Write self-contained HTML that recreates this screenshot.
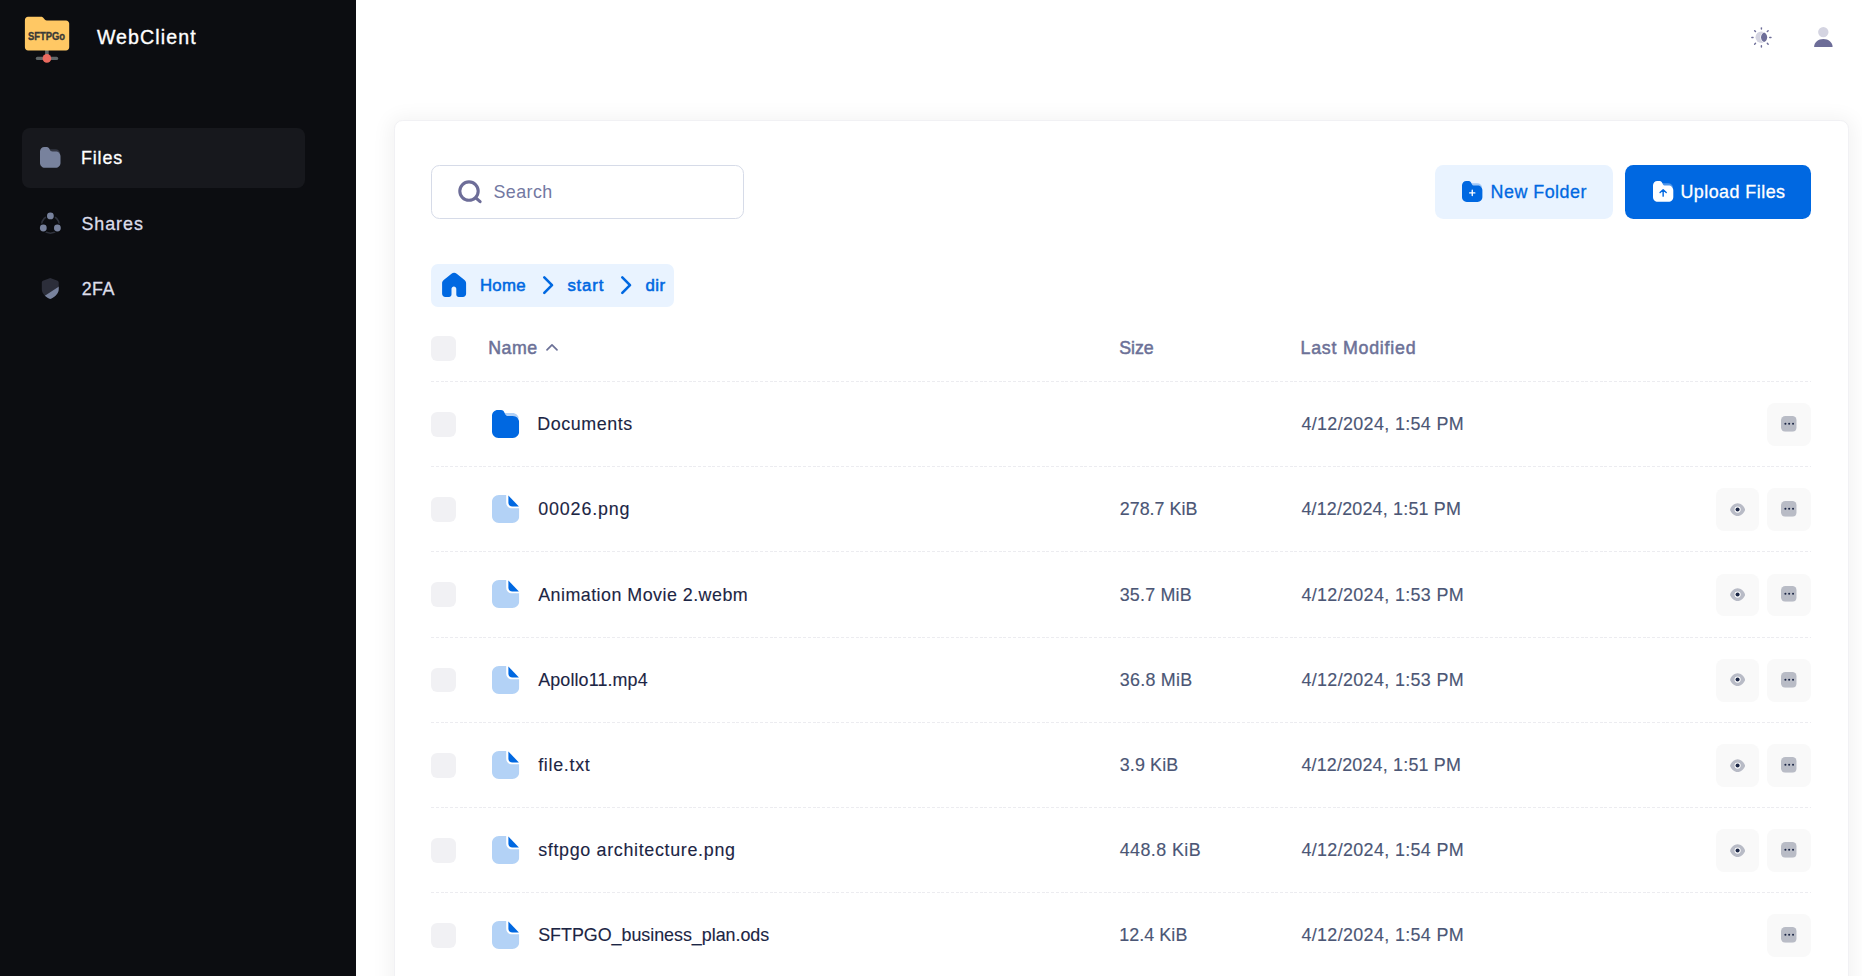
<!DOCTYPE html>
<html lang="en">
<head>
<meta charset="utf-8">
<title>WebClient - Files</title>
<style>
*{box-sizing:border-box;margin:0;padding:0}
html,body{width:1862px;height:976px;overflow:hidden;background:#fff}
body{font-family:"Liberation Sans",sans-serif;position:relative;color:#252f4a}
.abs{position:absolute}
svg{display:block;position:absolute;overflow:visible}
.t{position:absolute;white-space:nowrap;line-height:24px;height:24px}

/* sidebar */
#sidebar{position:absolute;left:0;top:0;width:356px;height:976px;background:#0c0d11}
.brand{color:#fff;-webkit-text-stroke:.35px #fff}
.mi{position:absolute;left:22px;width:283px;height:60px;border-radius:8px}
.mi.active{background:#17181d}
.mi .t{color:#dcdde9;-webkit-text-stroke:.3px #dcdde9}
.mi.active .t{color:#fff;-webkit-text-stroke:.3px #fff}

/* main */
#card{position:absolute;left:393.800px;top:119.700px;width:1455.200px;height:900px;background:#fff;border:1px solid #f1f1f4;border-radius:8.600px;box-shadow:0 2px 19px 4.800px rgba(0,0,0,.05)}
#search{position:absolute;left:431px;top:165px;width:313px;height:54px;border:1.340px solid #d6dbe8;border-radius:8.400px;background:#fff}
#search .t{color:#7378a2;margin:-.500px 0 0 -1.340px}
.btn{position:absolute;top:165px;height:54px;border-radius:8.400px}
.btn .t{-webkit-text-stroke:.3px currentColor}
#newfolder{left:1435px;width:178px;background:#e9f3ff;color:#0068e1}
#upload{left:1625px;width:186px;background:#0068e1;color:#fff}
#crumb{position:absolute;left:431px;top:264px;width:243.300px;height:43px;border-radius:7px;background:#e9f3ff;color:#0068e1}
#crumb .t{-webkit-text-stroke:.55px currentColor}

/* table */
.cb{position:absolute;left:431px;width:24.800px;height:24.800px;border-radius:6.200px;background:#f1f1f4}
.th{color:#6c7197;-webkit-text-stroke:.5px #6c7197}
.hr{position:absolute;left:431px;width:1380px;height:1px;background:repeating-linear-gradient(90deg,#ececf0 0,#ececf0 3px,transparent 3px,transparent 4.770px)}
.row{position:absolute;left:0;width:1862px;height:85px}
.nm{color:#1c2544;-webkit-text-stroke:.12px #1c2544}
.sz{color:#4b5675;-webkit-text-stroke:.15px #4b5675}
.dt{color:#4b5675;-webkit-text-stroke:.15px #4b5675}
.ib{position:absolute;top:21.900px;width:43.400px;height:42.800px;border-radius:8px;background:#f9f9f9}
.ib.eye{left:1716px;width:43px}
.ib.more{left:1767.300px}
</style>
</head>
<body>

<aside id="sidebar">
  <svg style="left:20px;top:12px" width="56" height="56" viewBox="20 12 56 56">
    <rect x="45.1" y="49" width="3.6" height="8" fill="#5f6567"/>
    <rect x="35.8" y="56.8" width="22.4" height="3.3" rx="1.6" fill="#5f6567"/>
    <circle cx="46.9" cy="58.4" r="4.3" fill="#eb6a5f"/>
    <path d="M28 16.8 H41 C42.4 16.8 43 17.3 43.9 18.4 L45 19.7 C45.5 20.2 46 20.4 46.8 20.4 H66 C67.8 20.4 69.2 21.8 69.2 23.6 V47.3 C69.2 49.1 67.8 50.5 66 50.5 H28.1 C26.3 50.5 24.9 49.1 24.9 47.3 V20 C24.9 18.2 26.3 16.8 28 16.8 Z" fill="#ffc864"/>
    <text x="46.500" y="40" text-anchor="middle" style="font-family:'Liberation Sans',sans-serif;font-weight:700;font-size:10.400px" fill="#3a3a37" stroke="#3a3a37" stroke-width=".35" textLength="37.200" lengthAdjust="spacingAndGlyphs">SFTPGo</text>
  </svg>
  <div class="t brand" style="left:96.90px;top:24.80px;font-size:19.6px;letter-spacing:1.089px">WebClient</div>

  <div class="mi active" style="top:128px">
    <svg style="left:18.100px;top:18.800px" width="20.500" height="20.700" viewBox="0 0 27.200 27.900" preserveAspectRatio="none">
      <path opacity=".3" fill="#78829d" d="M11 2.900H20.500C23.800 2.900 26.400 5.300 26.800 8.500H11Z"/>
      <path fill="#78829d" d="M5.800 0H9C11 0 11.900 1.200 12.700 3.200C13.500 5.200 14.600 6.100 16.600 6.100H20.800C24.400 6.100 27.200 8.900 27.200 12.500V21.500C27.200 25.100 24.400 27.900 20.800 27.900H6.400C2.800 27.900 0 25.100 0 21.500V5.800C0 2.600 2.600 0 5.800 0Z"/>
    </svg>
    <div class="t" style="left:59.00px;top:18.00px;font-size:17.9px;letter-spacing:0.843px">Files</div>
  </div>
  <div class="mi" style="top:193.5px">
    <svg style="left:16px;top:17.500px" width="25" height="25" viewBox="38 211 25 25">
      <circle cx="50.400" cy="224.500" r="8.700" fill="none" stroke="#78829d" stroke-opacity=".32" stroke-width="1.600"/>
      <g fill="#0c0d11"><circle cx="50.400" cy="215.900" r="4.700"/><circle cx="43.300" cy="228" r="4.700"/><circle cx="57.400" cy="228" r="4.700"/></g>
      <g fill="#78829d"><circle cx="50.400" cy="215.900" r="3.400"/><circle cx="43.300" cy="228" r="3.400"/><circle cx="57.400" cy="228" r="3.400"/></g>
    </svg>
    <div class="t" style="left:59.40px;top:18.60px;font-size:17.9px;letter-spacing:0.952px">Shares</div>
  </div>
  <div class="mi" style="top:258.8px">
    <svg style="left:18px;top:17.200px" width="22" height="25" viewBox="40 276 22 25">
      <defs><clipPath id="shc"><path d="M50.250 278 57.600 280.800C58.300 281.100 58.700 281.700 58.700 282.400V289C58.700 293.500 55.200 296.800 50.900 298.800C50.500 299 50 299 49.600 298.800C45.300 296.800 41.800 293.500 41.800 289V282.400C41.800 281.700 42.200 281.100 42.900 280.800Z"/></clipPath></defs>
      <g clip-path="url(#shc)"><rect x="40" y="276" width="22" height="25" fill="#2c2e3a"/><path d="M40 299 62 284.400V302H40Z" fill="#78829d"/></g>
    </svg>
    <div class="t" style="left:59.80px;top:18.10px;font-size:17.9px;letter-spacing:0.355px">2FA</div>
  </div>
</aside>

<!-- header icons -->
<svg style="left:1749px;top:25px" width="25" height="25" viewBox="1749 25 25 25">
  <g stroke="#6d6d98" stroke-width="1.450" stroke-linecap="round"><line x1="1769.75" y1="37.40" x2="1770.95" y2="37.40"/><line x1="1767.30" y1="43.30" x2="1768.15" y2="44.15"/><line x1="1761.40" y1="45.75" x2="1761.40" y2="46.95"/><line x1="1755.50" y1="43.30" x2="1754.65" y2="44.15"/><line x1="1753.05" y1="37.40" x2="1751.85" y2="37.40"/><line x1="1755.50" y1="31.50" x2="1754.65" y2="30.65"/><line x1="1761.40" y1="29.05" x2="1761.40" y2="27.85"/><line x1="1767.30" y1="31.50" x2="1768.15" y2="30.65"/></g>
  <circle cx="1761.300" cy="37.200" r="5.800" fill="#d4d4e1"/>
  <path d="M1764.100 32.500A5.300 5.300 0 0 1 1764.100 42.100A5.300 5.300 0 0 1 1764.100 32.500Z" fill="#6d6d98" stroke="#fff" stroke-width="1.300" paint-order="stroke"/>
</svg>
<svg style="left:1812px;top:25px" width="24" height="24" viewBox="1812 25 24 24">
  <circle cx="1823.300" cy="32.100" r="5.200" fill="#d4d4e1"/>
  <path d="M1814.100 46.900 C1814.100 42.500 1818.200 39 1823.350 39 C1828.500 39 1832.600 42.500 1832.600 46.900 Z" fill="#6d6d98"/>
</svg>

<div id="card"></div>

<!-- toolbar -->
<div id="search">
  <svg style="left:24.660px;top:12.700px" width="26" height="26" viewBox="457 178.400 26 26">
    <circle cx="469" cy="190.500" r="9.200" fill="none" stroke="#6d6d98" stroke-width="3.100"/>
    <line x1="475.800" y1="197.300" x2="480.100" y2="201.100" stroke="#6d6d98" stroke-width="3.100" stroke-linecap="round"/>
  </svg>
  <div class="t" style="left:62.80px;top:14.80px;font-size:17.9px;letter-spacing:0.433px">Search</div>
</div>

<div class="btn" id="newfolder">
  <svg style="left:27.350px;top:15.900px" width="20.400" height="20.900" viewBox="0 0 27.200 27.900" preserveAspectRatio="none">
    <path opacity=".3" fill="#0068e1" d="M11 2.900H20.500C23.800 2.900 26.400 5.300 26.800 8.500H11Z"/>
    <path fill="#0068e1" d="M5.800 0H9C11 0 11.900 1.200 12.700 3.200C13.500 5.200 14.600 6.100 16.600 6.100H20.800C24.400 6.100 27.200 8.900 27.200 12.500V21.500C27.200 25.100 24.400 27.900 20.800 27.900H6.400C2.800 27.900 0 25.100 0 21.500V5.800C0 2.600 2.600 0 5.800 0Z"/>
    <path d="M13.670 12.400V19.300M10.200 15.870H17.100" stroke="#fff" stroke-width="1.800" stroke-linecap="round"/>
  </svg>
  <div class="t" style="left:55.60px;top:15.00px;font-size:17.9px;letter-spacing:0.476px">New Folder</div>
</div>
<div class="btn" id="upload">
  <svg style="left:27.700px;top:15.800px" width="20.300" height="20.800" viewBox="0 0 27.200 27.900" preserveAspectRatio="none">
    <path opacity=".3" fill="#fff" d="M11 2.900H20.500C23.800 2.900 26.400 5.300 26.800 8.500H11Z"/>
    <path fill="#fff" d="M5.800 0H9C11 0 11.900 1.200 12.700 3.200C13.500 5.200 14.600 6.100 16.600 6.100H20.800C24.400 6.100 27.200 8.900 27.200 12.500V21.500C27.200 25.100 24.400 27.900 20.800 27.900H6.400C2.800 27.900 0 25.100 0 21.500V5.800C0 2.600 2.600 0 5.800 0Z"/>
    <path d="M13.600 20.300V11.900M9.500 15.400 13.600 11.700 17.700 15.400" fill="none" stroke="#0068e1" stroke-width="1.900" stroke-linecap="round" stroke-linejoin="round"/>
  </svg>
  <div class="t" style="left:55.40px;top:15.00px;font-size:17.9px;letter-spacing:0.473px">Upload Files</div>
</div>

<!-- breadcrumb -->
<div id="crumb">
  <svg style="left:10.800px;top:8.500px" width="24" height="24" viewBox="441.800 272.500 24 24">
    <path fill="#0068e1" d="M451.300 273.300 443.500 279.500C442.500 280.300 441.900 281.500 441.900 282.800V293.200C441.900 295 443.300 296.400 445.100 296.400H448.900C450.200 296.400 451.300 295.300 451.300 294V288.300C451.300 287 452.400 285.900 453.700 285.900S456.100 287 456.100 288.300V294C456.100 295.300 457.200 296.400 458.500 296.400H462.700C464.500 296.400 465.900 295 465.900 293.200V282.800C465.900 281.500 465.300 280.300 464.300 279.500L456.500 273.300C455 272.050 452.800 272.050 451.300 273.300Z"/>
  </svg>
  <div class="t" style="left:48.90px;top:9.50px;font-size:16.8px;letter-spacing:0.323px">Home</div>
  <svg style="left:112px;top:11.700px" width="11" height="19" viewBox="543 275.700 11 19"><path d="M544.300 277 552 284.750 544.300 292.500" fill="none" stroke="#0068e1" stroke-width="2.600" stroke-linecap="round" stroke-linejoin="round"/></svg>
  <div class="t" style="left:136.40px;top:9.50px;font-size:16.8px;letter-spacing:0.831px">start</div>
  <svg style="left:190.200px;top:11.700px" width="11" height="19" viewBox="543 275.700 11 19"><path d="M544.300 277 552 284.750 544.300 292.500" fill="none" stroke="#0068e1" stroke-width="2.600" stroke-linecap="round" stroke-linejoin="round"/></svg>
  <div class="t" style="left:214.60px;top:9.50px;font-size:16.8px;letter-spacing:0.369px">dir</div>
</div>

<!-- table -->
<div id="table">
<svg width="0" height="0" style="left:0;top:0"><defs>
  <symbol id="i-folder" viewBox="0 0 27.200 27.900" preserveAspectRatio="none">
    <path opacity=".3" fill="#0068e1" d="M11 2.900H20.500C23.800 2.900 26.400 5.300 26.800 8.500H11Z"/>
    <path fill="#0068e1" d="M5.800 0H9C11 0 11.900 1.200 12.700 3.200C13.500 5.200 14.600 6.100 16.600 6.100H20.800C24.400 6.100 27.200 8.900 27.200 12.500V21.500C27.200 25.100 24.400 27.900 20.800 27.900H6.400C2.800 27.900 0 25.100 0 21.500V5.800C0 2.600 2.600 0 5.800 0Z"/>
  </symbol>
  <symbol id="i-file" viewBox="0 0 27.300 28">
    <path fill="#b3d2f6" d="M7 0H14.200V7.500C14.200 11 16.400 13.200 19.900 13.200H27.300V21C27.300 24.900 24.200 28 20.300 28H7C3.100 28 0 24.900 0 21V7C0 3.100 3.100 0 7 0Z"/>
    <path fill="#0068e1" d="M16.400 0.400 26.900 11.500H20.500C18 11.500 16.400 9.900 16.400 7.400Z"/>
  </symbol>
  <symbol id="i-eye" viewBox="0 0 16 14">
    <path fill="#b8bbc6" d="M8 0.300C11.600 0.300 14.400 3.300 15.700 6.200C15.900 6.700 15.900 7.300 15.700 7.800C14.400 10.700 11.600 13.700 8 13.700S1.600 10.700 0.300 7.800C0.100 7.300 0.100 6.700 0.300 6.200C1.600 3.300 4.400 0.300 8 0.300Z"/>
    <circle cx="8" cy="6.900" r="3.250" fill="#fff"/><circle cx="8" cy="6.900" r="2.150" fill="#1b2645"/>
  </symbol>
  <symbol id="i-more" viewBox="0 0 16 16">
    <rect width="16" height="16" rx="4.400" fill="#b9bcc6"/>
    <circle cx="4.500" cy="8" r="1.050" fill="#1b2645"/><circle cx="8.300" cy="8" r="1.050" fill="#1b2645"/><circle cx="12.300" cy="8" r="1.050" fill="#1b2645"/>
  </symbol>
</defs></svg>
<div class="cb" style="top:336.100px"></div>
<div class="t th" style="left:488.30px;top:335.70px;font-size:17.8px;letter-spacing:0.486px">Name</div>
<svg style="left:545px;top:343px" width="14" height="9" viewBox="545 343.500 14 9"><path d="M547 350.300 552 345.400 557 350.300" fill="none" stroke="#6c7197" stroke-width="1.700" stroke-linecap="round" stroke-linejoin="round"/></svg>
<div class="t th" style="left:1119.30px;top:335.70px;font-size:17.8px;letter-spacing:-0.100px">Size</div>
<div class="t th" style="left:1300.50px;top:335.70px;font-size:17.8px;letter-spacing:0.778px">Last Modified</div>
<div class="hr" style="top:381px"></div>
<div class="row" style="top:381.30px">
  <div class="cb" style="top:30.800px"></div>
  <svg style="left:491.800px;top:28.600px" width="27.200" height="27.900"><use href="#i-folder"/></svg>
  <div class="t nm" style="left:537.20px;top:30.90px;font-size:17.9px;letter-spacing:0.570px">Documents</div>
  <div class="t dt" style="left:1301.40px;top:30.90px;font-size:17.9px;letter-spacing:0.361px">4/12/2024, 1:54 PM</div>
  <div class="ib more"><svg style="left:13.900px;top:12.800px" width="15.700" height="15.700"><use href="#i-more"/></svg></div>
</div>
<div class="hr" style="top:466px"></div>
<div class="row" style="top:466.50px">
  <div class="cb" style="top:30.800px"></div>
  <svg style="left:491.800px;top:28.800px" width="27.300" height="28"><use href="#i-file"/></svg>
  <div class="t nm" style="left:538.20px;top:30.90px;font-size:17.9px;letter-spacing:0.847px">00026.png</div>
  <div class="t sz" style="left:1119.70px;top:30.90px;font-size:17.9px;letter-spacing:0.019px">278.7 KiB</div>
  <div class="t dt" style="left:1301.40px;top:30.90px;font-size:17.9px;letter-spacing:0.197px">4/12/2024, 1:51 PM</div>
  <div class="ib eye"><svg style="left:14px;top:14.700px" width="15.200" height="13.300"><use href="#i-eye"/></svg></div>
  <div class="ib more"><svg style="left:13.900px;top:12.800px" width="15.700" height="15.700"><use href="#i-more"/></svg></div>
</div>
<div class="hr" style="top:551px"></div>
<div class="row" style="top:551.70px">
  <div class="cb" style="top:30.800px"></div>
  <svg style="left:491.800px;top:28.800px" width="27.300" height="28"><use href="#i-file"/></svg>
  <div class="t nm" style="left:538.20px;top:30.90px;font-size:17.9px;letter-spacing:0.459px">Animation Movie 2.webm</div>
  <div class="t sz" style="left:1119.70px;top:30.90px;font-size:17.9px;letter-spacing:0.190px">35.7 MiB</div>
  <div class="t dt" style="left:1301.40px;top:30.90px;font-size:17.9px;letter-spacing:0.361px">4/12/2024, 1:53 PM</div>
  <div class="ib eye"><svg style="left:14px;top:14.700px" width="15.200" height="13.300"><use href="#i-eye"/></svg></div>
  <div class="ib more"><svg style="left:13.900px;top:12.800px" width="15.700" height="15.700"><use href="#i-more"/></svg></div>
</div>
<div class="hr" style="top:637px"></div>
<div class="row" style="top:636.90px">
  <div class="cb" style="top:30.800px"></div>
  <svg style="left:491.800px;top:28.800px" width="27.300" height="28"><use href="#i-file"/></svg>
  <div class="t nm" style="left:538.20px;top:30.90px;font-size:17.9px;letter-spacing:0.125px">Apollo11.mp4</div>
  <div class="t sz" style="left:1119.70px;top:30.90px;font-size:17.9px;letter-spacing:0.276px">36.8 MiB</div>
  <div class="t dt" style="left:1301.40px;top:30.90px;font-size:17.9px;letter-spacing:0.361px">4/12/2024, 1:53 PM</div>
  <div class="ib eye"><svg style="left:14px;top:14.700px" width="15.200" height="13.300"><use href="#i-eye"/></svg></div>
  <div class="ib more"><svg style="left:13.900px;top:12.800px" width="15.700" height="15.700"><use href="#i-more"/></svg></div>
</div>
<div class="hr" style="top:722px"></div>
<div class="row" style="top:722.10px">
  <div class="cb" style="top:30.800px"></div>
  <svg style="left:491.800px;top:28.800px" width="27.300" height="28"><use href="#i-file"/></svg>
  <div class="t nm" style="left:538.20px;top:30.90px;font-size:17.9px;letter-spacing:0.692px">file.txt</div>
  <div class="t sz" style="left:1119.70px;top:30.90px;font-size:17.9px;letter-spacing:0.142px">3.9 KiB</div>
  <div class="t dt" style="left:1301.40px;top:30.90px;font-size:17.9px;letter-spacing:0.197px">4/12/2024, 1:51 PM</div>
  <div class="ib eye"><svg style="left:14px;top:14.700px" width="15.200" height="13.300"><use href="#i-eye"/></svg></div>
  <div class="ib more"><svg style="left:13.900px;top:12.800px" width="15.700" height="15.700"><use href="#i-more"/></svg></div>
</div>
<div class="hr" style="top:807px"></div>
<div class="row" style="top:807.30px">
  <div class="cb" style="top:30.800px"></div>
  <svg style="left:491.800px;top:28.800px" width="27.300" height="28"><use href="#i-file"/></svg>
  <div class="t nm" style="left:538.20px;top:30.90px;font-size:17.9px;letter-spacing:0.671px">sftpgo architecture.png</div>
  <div class="t sz" style="left:1119.70px;top:30.90px;font-size:17.9px;letter-spacing:0.419px">448.8 KiB</div>
  <div class="t dt" style="left:1301.40px;top:30.90px;font-size:17.9px;letter-spacing:0.361px">4/12/2024, 1:54 PM</div>
  <div class="ib eye"><svg style="left:14px;top:14.700px" width="15.200" height="13.300"><use href="#i-eye"/></svg></div>
  <div class="ib more"><svg style="left:13.900px;top:12.800px" width="15.700" height="15.700"><use href="#i-more"/></svg></div>
</div>
<div class="hr" style="top:892px"></div>
<div class="row" style="top:892.50px">
  <div class="cb" style="top:30.800px"></div>
  <svg style="left:491.800px;top:28.800px" width="27.300" height="28"><use href="#i-file"/></svg>
  <div class="t nm" style="left:538.20px;top:30.90px;font-size:17.9px;letter-spacing:-0.029px">SFTPGO_business_plan.ods</div>
  <div class="t sz" style="left:1119.30px;top:30.90px;font-size:17.9px;letter-spacing:0.057px">12.4 KiB</div>
  <div class="t dt" style="left:1301.40px;top:30.90px;font-size:17.9px;letter-spacing:0.361px">4/12/2024, 1:54 PM</div>
  <div class="ib more"><svg style="left:13.900px;top:12.800px" width="15.700" height="15.700"><use href="#i-more"/></svg></div>
</div>
</div>

</body>
</html>
